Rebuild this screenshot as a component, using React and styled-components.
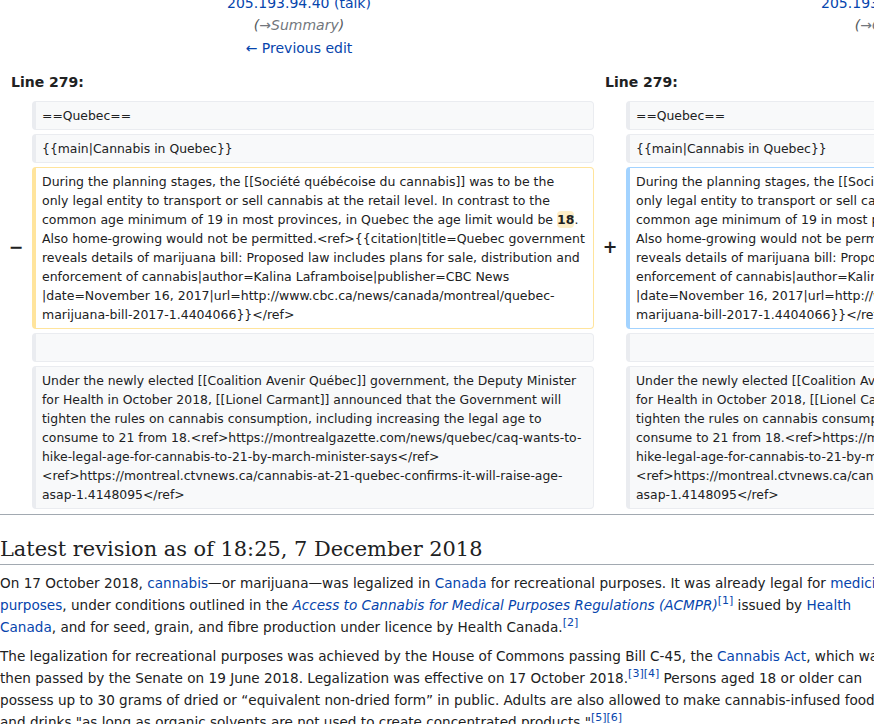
import React from 'react';
import styled, { createGlobalStyle } from 'styled-components';

const GlobalStyle = createGlobalStyle`
  body {
    margin: 0;
    background: #fff;
    color: #202122;
    font-family: 'DejaVu Sans', sans-serif;
    overflow: hidden;
  }
`;

const Page = styled.div`
  width: 1192px;
  margin-top: -8px;
  font-size: 14px;
`;

const DiffGrid = styled.div`
  display: grid;
  grid-template-columns: 24px 562px 24px 562px;
  column-gap: 4px;
  row-gap: 4px;
  padding: 0 4px;
`;

const TitleCell = styled.div`
  grid-column: span 2;
  text-align: center;
  line-height: 22.4px;
  padding-bottom: 8px;
`;

const TitleLine = styled.div``;

const Link = styled.a`
  color: #0645ad;
  text-decoration: none;
  font-style: ${(p) => (p.$italic ? 'italic' : 'normal')};
`;

const Comment = styled.span`
  font-style: italic;
  color: #54595d;
`;

const AutoComment = styled.span`
  color: #72777d;
`;

const LineNo = styled.div`
  grid-column: span 2;
  font-weight: bold;
  line-height: 22.4px;
  padding: 0 7px 3px;
`;

const Marker = styled.div`
  align-self: center;
  text-align: center;
  font-weight: bold;
  font-size: 17.5px;
  line-height: 1;
  color: #202122;
`;

const borderColors = {
  context: '#eaecf0',
  deleted: '#ffe49c',
  added: '#a3d3ff',
};

const Line = styled.div`
  box-sizing: border-box;
  min-height: 29px;
  font-size: ${(p) => (p.$kind === 'context' ? '12.4px' : '12.5px')};
  line-height: 19px;
  padding: 4px 6px;
  border: 1px solid ${(p) => borderColors[p.$kind]};
  border-left-width: 4px;
  border-radius: 4px;
  background: ${(p) => (p.$kind === 'context' ? '#f8f9fa' : '#fff')};
  white-space: pre-wrap;
  overflow-wrap: break-word;
  color: #202122;
`;

const Change = styled.strong`
  font-weight: bold;
  border-radius: 4px;
  padding: 1px 0;
  background: ${(p) => (p.$kind === 'added' ? '#d8ecff' : '#feeec8')};
`;

const Rule = styled.hr`
  border: none;
  height: 1px;
  background: #a2a9b1;
  margin: 5px 0 0;
`;

const Article = styled.div`
  width: 900px;
  font-size: 13.6px;
`;

const Heading = styled.h2`
  font-family: 'DejaVu Serif', serif;
  font-weight: normal;
  font-size: 20.9px;
  line-height: 29px;
  margin: 20px 0 0;
  border-bottom: 1px solid #a2a9b1;
`;

const Para = styled.p`
  margin: 7px 0 0;
  line-height: 22px;
`;

const Ref = styled.sup`
  font-size: 11px;
  line-height: 1;
  vertical-align: super;
  a {
    color: #0645ad;
    text-decoration: none;
  }
`;

// wrapped where the source diff wraps
const changedHead = [
  'During the planning stages, the [[Société québécoise du cannabis]] was to be the',
  'only legal entity to transport or sell cannabis at the retail level. In contrast to the',
  'common age minimum of 19 in most provinces, in Quebec the age limit would be ',
].join('\n');

const changedTail = '.\n' + [
  'Also home-growing would not be permitted.<ref>{{citation|title=Quebec government',
  'reveals details of marijuana bill: Proposed law includes plans for sale, distribution and',
  'enforcement of cannabis|author=Kalina Laframboise|publisher=CBC News',
  '|date=November 16, 2017|url=http://www.cbc.ca/news/canada/montreal/quebec-',
  'marijuana-bill-2017-1.4404066}}</ref>',
].join('\n');

const underText =
  'Under the newly elected [[Coalition Avenir Québec]] government, the Deputy Minister for Health in October 2018, [[Lionel Carmant]] announced that the Government will tighten the rules on cannabis consumption, including increasing the legal age to consume to 21 from 18.<ref>https://montrealgazette.com/news/quebec/caq-wants-to-hike-legal-age-for-cannabis-to-21-by-march-minister-says</ref> <ref>https://montreal.ctvnews.ca/cannabis-at-21-quebec-confirms-it-will-raise-age-asap-1.4148095</ref>';

const ContextRow = ({ text }) => (
  <>
    <Marker />
    <Line $kind="context">{text}</Line>
    <Marker />
    <Line $kind="context">{text}</Line>
  </>
);

const ChangedRow = () => (
  <>
    <Marker>−</Marker>
    <Line $kind="deleted">
      {changedHead}<Change $kind="deleted">18</Change>{changedTail}
    </Line>
    <Marker>+</Marker>
    <Line $kind="added">
      {changedHead}<Change $kind="added">21</Change>{changedTail}
    </Line>
  </>
);

const RevisionTitle = ({ section, children }) => (
  <TitleCell>
    <TitleLine><Link href="#">205.193.94.40</Link> <Link href="#">(talk)</Link></TitleLine>
    <TitleLine><Comment>(<AutoComment>→{section}</AutoComment>)</Comment></TitleLine>
    {children}
  </TitleCell>
);

const App = () => {
  return (
    <Page>
      <GlobalStyle />
      <DiffGrid>
        <RevisionTitle section="Summary">
          <TitleLine><Link href="#">← Previous edit</Link></TitleLine>
        </RevisionTitle>
        <RevisionTitle section="Quebec" />

        <LineNo>Line 279:</LineNo>
        <LineNo>Line 279:</LineNo>

        <ContextRow text="==Quebec==" />
        <ContextRow text="{{main|Cannabis in Quebec}}" />
        <ChangedRow />
        <ContextRow text="" />
        <ContextRow text={underText} />
      </DiffGrid>

      <Rule />

      <Article>
        <Heading>Latest revision as of 18:25, 7 December 2018</Heading>
        <Para>
          On 17 October 2018, <Link href="#">cannabis</Link>—or marijuana—was legalized in{' '}
          <Link href="#">Canada</Link> for recreational purposes. It was already legal for{' '}
          <Link href="#">medicinal purposes</Link>, under conditions outlined in the{' '}
          <Link href="#" $italic>Access to Cannabis for Medical Purposes Regulations (ACMPR)</Link>
          <Ref><a href="#">[1]</a></Ref> issued by <Link href="#">Health Canada</Link>, and for seed,
          grain, and fibre production under licence by Health Canada.<Ref><a href="#">[2]</a></Ref>
        </Para>
        <Para>
          The legalization for recreational purposes was achieved by the House of Commons passing Bill
          C-45, the <Link href="#">Cannabis Act</Link>, which was then passed by the Senate on 19 June
          2018. Legalization was effective on 17 October 2018.<Ref><a href="#">[3]</a></Ref>
          <Ref><a href="#">[4]</a></Ref> Persons aged 18 or older can possess up to 30 grams of dried or
          “equivalent non-dried form” in public. Adults are also allowed to make cannabis-infused food
          and drinks "as long as organic solvents are not used to create concentrated products."
          <Ref><a href="#">[5]</a></Ref><Ref><a href="#">[6]</a></Ref>
        </Para>
      </Article>
    </Page>
  );
};

export default App;
